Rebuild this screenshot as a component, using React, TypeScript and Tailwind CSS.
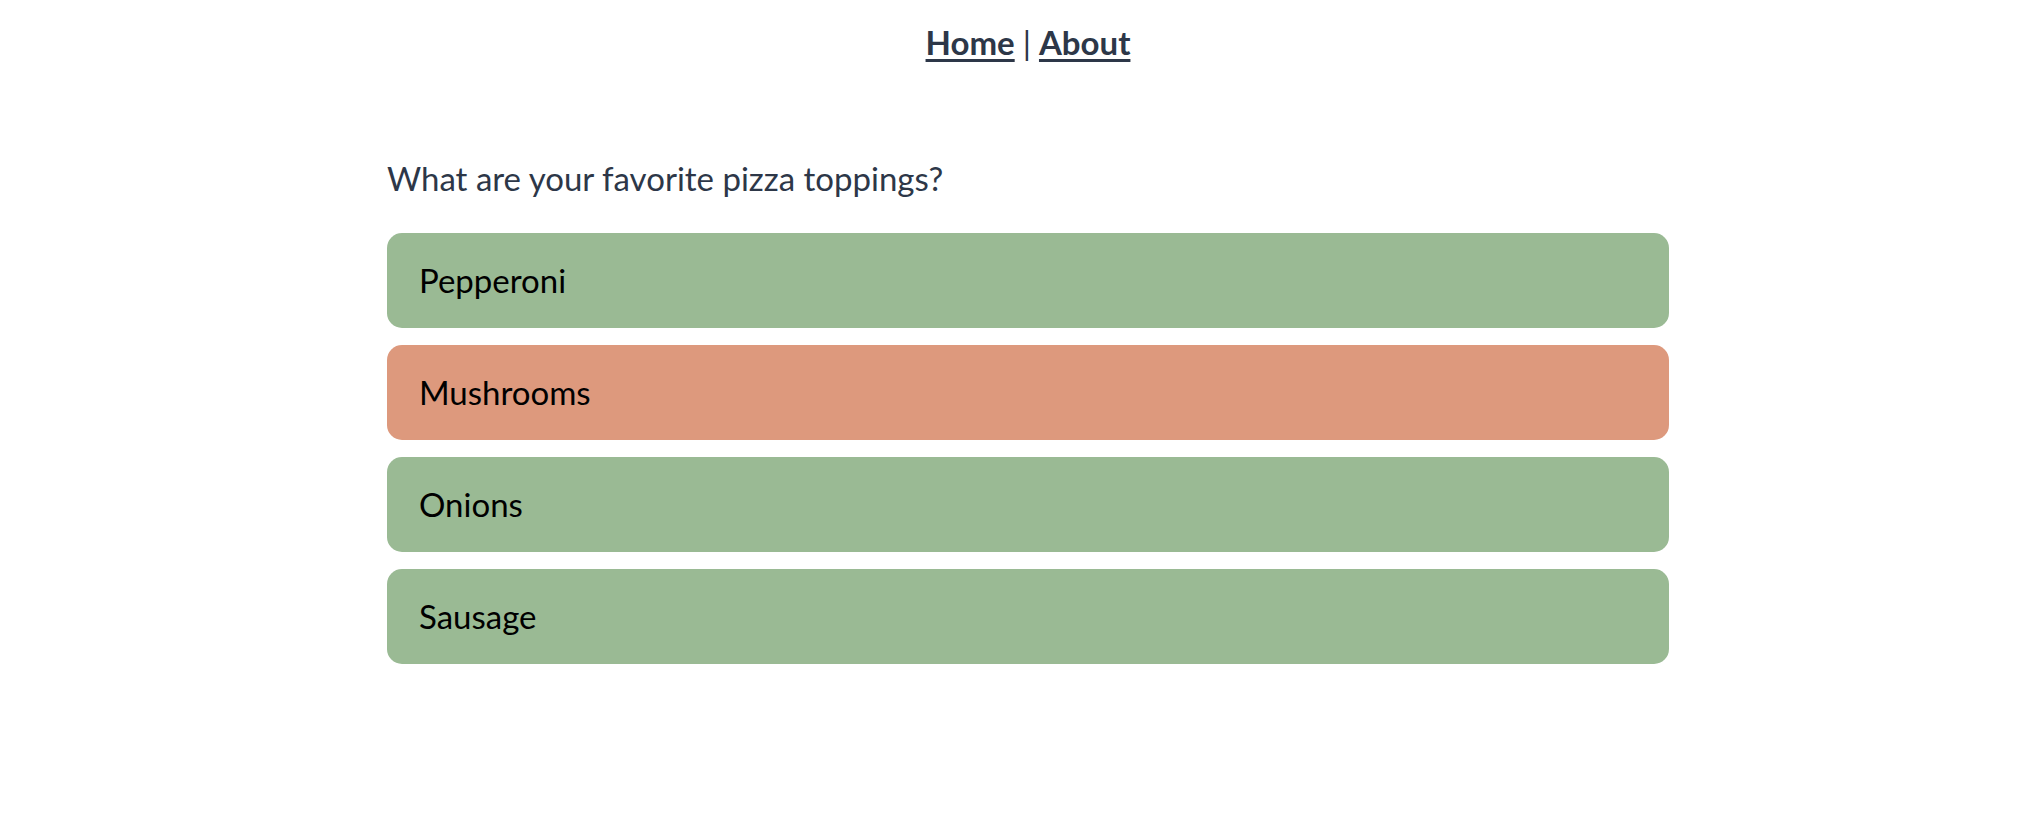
const toppings = [
  { name: 'Pepperoni', liked: true },
  { name: 'Mushrooms', liked: false },
  { name: 'Onions', liked: true },
  { name: 'Sausage', liked: true },
];

const App = () => {
  return (
    <div className="min-h-screen bg-white font-['Lato',sans-serif] text-[#2d3748]">
      <nav className="flex justify-center pt-[18px] pl-[14px] text-[33px] font-bold">
        <a href="#" className="underline underline-offset-4">
          Home
        </a>
        <span className="font-normal mx-[8px]">|</span>
        <a href="#" className="underline underline-offset-4">
          About
        </a>
      </nav>
      <div className="w-[1282px] ml-[387px] mt-[86px]">
        <p className="text-[33px] mb-[30px]">What are your favorite pizza toppings?</p>
        <div className="flex flex-col gap-[17px]">
          {toppings.map((t) => (
            <div
              key={t.name}
              className={
                t.liked
                  ? 'h-[95px] flex items-center px-[32px] rounded-[15px] bg-[#9aba94] text-black text-[33px]'
                  : 'h-[95px] flex items-center px-[32px] rounded-[15px] bg-[#dd997d] text-black text-[33px]'
              }
            >
              {t.name}
            </div>
          ))}
        </div>
      </div>
    </div>
  );
};

export default App;
